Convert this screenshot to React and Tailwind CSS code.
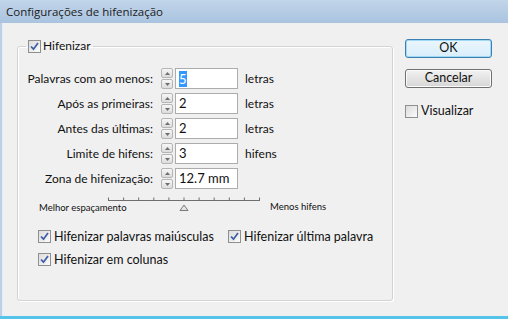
import { useState } from "react";

const FONT = "font-['Lato','Liberation_Sans',sans-serif]";

function Check({ checked }) {
  return (
    <span className="w-[13px] h-[13px] shrink-0 border border-[#8e8f8f] bg-gradient-to-br from-[#dcdcdc] to-[#fbfbfb] flex items-center justify-center">
      {checked && (
        <svg width="9" height="9" viewBox="0 0 9 9">
          <path d="M1 4.5 L3.5 7.2 L8 1" fill="none" stroke="#3f5fa8" strokeWidth="1.8" />
        </svg>
      )}
    </span>
  );
}

function Spinner() {
  const btn = "h-[10px] w-[12px] border border-[#b5b5b5] rounded-[2px] bg-gradient-to-b from-[#f7f7f7] to-[#dcdcdc] flex items-center justify-center";
  return (
    <div className="flex flex-col gap-px">
      <div className={btn}>
        <svg width="5" height="3" viewBox="0 0 5 3"><path d="M0 3 L2.5 0 L5 3 Z" fill="#6e6e6e" /></svg>
      </div>
      <div className={btn}>
        <svg width="5" height="3" viewBox="0 0 5 3"><path d="M0 0 L5 0 L2.5 3 Z" fill="#6e6e6e" /></svg>
      </div>
    </div>
  );
}

const rows = [
  { label: "Palavras com ao menos:", value: "5", unit: "letras", selected: true },
  { label: "Após as primeiras:", value: "2", unit: "letras" },
  { label: "Antes das últimas:", value: "2", unit: "letras" },
  { label: "Limite de hifens:", value: "3", unit: "hifens" },
  { label: "Zona de hifenização:", value: "12.7 mm", unit: "" },
];

function Slider() {
  const ticks = Array.from({ length: 11 }, (_, i) => 0.5 + i * 15.1);
  return (
    <svg width="153" height="16" viewBox="0 0 153 16" className="shrink-0">
      <line x1="0" y1="4.5" x2="152" y2="4.5" stroke="#6f6f6f" />
      {ticks.map((x, i) => (
        <line key={i} x1={x} y1="1.5" x2={x} y2="4.5" stroke="#6f6f6f" />
      ))}
      <path d="M76 9 L72 14.5 L80 14.5 Z" fill="#e4e4e4" stroke="#7a7a7a" />
    </svg>
  );
}

export default function App() {
  const [opts] = useState({ hyph: true, caps: true, last: true, cols: true, preview: false });

  return (
    <div className={`w-[508px] h-[319px] flex flex-col bg-[#f0f0f0] overflow-hidden text-[#111] ${FONT}`}>
      {/* title bar */}
      <div className="h-[23px] shrink-0 bg-gradient-to-b from-[#c2d5ea] to-[#a9c3df] flex items-center pl-[6px] text-[11.5px] font-['Open_Sans',sans-serif] text-[#1b1b1b]">
        Configurações de hifenização
      </div>

      <div className="flex flex-1 min-h-0">
        <div className="w-[2px] bg-[#bdd0e6]" />
        <div className="w-px bg-[#e6edf5]" />

        <div className="flex flex-1 pl-[14px] pt-[15px]">
          {/* group */}
          <fieldset className="w-[376px] h-[263px] border border-[#d3d3d3] rounded-[3px] shadow-[inset_1px_1px_0_#fff,1px_1px_0_#fff] px-0 pb-0">
            <legend className="ml-[8px] px-[2px] flex items-center gap-[2px] text-[12px] leading-[16px]">
              <Check checked={opts.hyph} />
              <span>Hifenizar</span>
            </legend>

            <div className="flex flex-col gap-[4px] mt-[14px]">
              {rows.map((r) => (
                <div key={r.label} className="flex items-center h-[21px]">
                  <span className="w-[135px] text-right text-[12px] whitespace-nowrap">{r.label}</span>
                  <div className="ml-[8px]"><Spinner /></div>
                  <div className="ml-[2px] w-[63px] h-[21px] border border-[#acacac] bg-white flex items-center pl-[3px] text-[13px]">
                    {r.selected ? <span className="bg-[#3399ff] text-white leading-[16px]">{r.value}</span> : r.value}
                  </div>
                  {r.unit && <span className="ml-[7px] text-[12px]">{r.unit}</span>}
                </div>
              ))}
            </div>

            {/* spacing slider */}
            <div className="flex items-start mt-[7px] pl-[21px]">
              <span className="w-[69px] mt-[6px] text-[9.5px] leading-[12px] whitespace-nowrap">Melhor espaçamento</span>
              <Slider />
              <span className="ml-[9px] mt-[5px] text-[9.5px] leading-[12px] whitespace-nowrap">Menos hifens</span>
            </div>

            <div className="flex flex-col gap-[10px] mt-[16px] pl-[20px] text-[12.5px] leading-[13px]">
              <div className="flex items-center">
                <label className="w-[190px] flex items-center gap-[3px]">
                  <Check checked={opts.caps} />
                  <span>Hifenizar palavras maiúsculas</span>
                </label>
                <label className="flex items-center gap-[3px]">
                  <Check checked={opts.last} />
                  <span>Hifenizar última palavra</span>
                </label>
              </div>
              <label className="flex items-center gap-[3px]">
                <Check checked={opts.cols} />
                <span>Hifenizar em colunas</span>
              </label>
            </div>
          </fieldset>

          {/* buttons */}
          <div className="ml-[12px] w-[87px] pt-px flex flex-col text-[12.5px]">
            <button className="h-[19px] rounded-[3px] border border-[#3c7fb1] bg-gradient-to-b from-[#eaf6fd] to-[#d9eefb] shadow-[inset_0_0_0_1px_#9fd9f5] leading-none">
              OK
            </button>
            <button className="mt-[11px] h-[19px] rounded-[3px] border border-[#707070] bg-gradient-to-b from-[#f2f2f2] to-[#d6d6d6] shadow-[inset_0_0_0_1px_#fcfcfc] leading-none">
              Cancelar
            </button>
            <label className="mt-[14px] flex items-center gap-[3px] text-[12.5px]">
              <Check checked={opts.preview} />
              <span>Visualizar</span>
            </label>
          </div>
        </div>
      </div>

      <div className="h-[3px] shrink-0 bg-[#54c4ea]" />
    </div>
  );
}
